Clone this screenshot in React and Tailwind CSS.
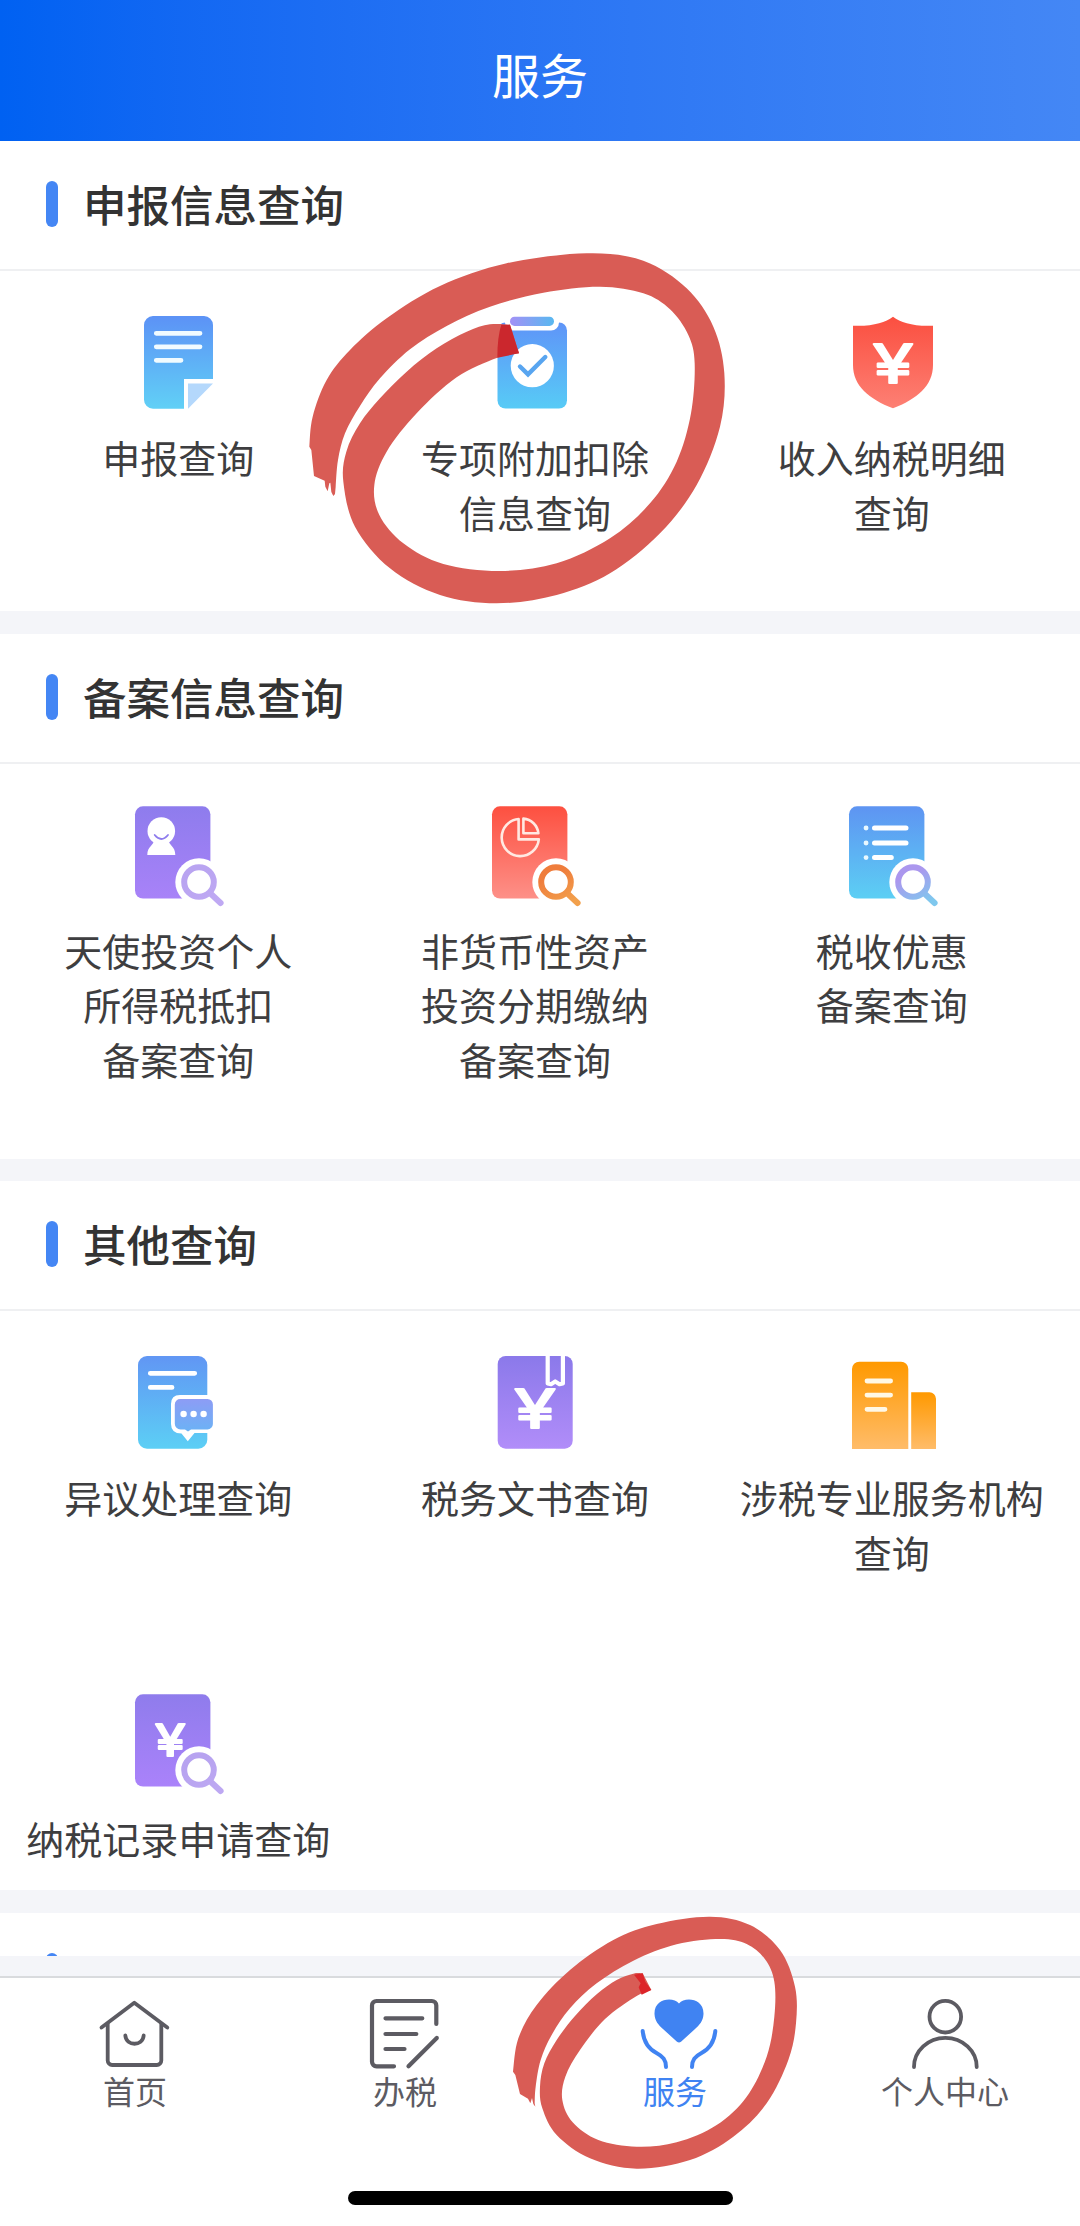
import clsx from 'clsx';

const sections = [
  {
    title: '申报信息查询',
    size: 'h-[470px]',
    items: [
      { icon: ReportIcon, lines: ['申报查询'] },
      { icon: DeductionIcon, lines: ['专项附加扣除', '信息查询'] },
      { icon: IncomeIcon, lines: ['收入纳税明细', '查询'] },
    ],
  },
  {
    title: '备案信息查询',
    size: 'h-[525px]',
    items: [
      { icon: AngelIcon, lines: ['天使投资个人', '所得税抵扣', '备案查询'] },
      { icon: AssetIcon, lines: ['非货币性资产', '投资分期缴纳', '备案查询'] },
      { icon: BenefitIcon, lines: ['税收优惠', '备案查询'] },
    ],
  },
  {
    title: '其他查询',
    size: 'h-[709px]',
    items: [
      { icon: DisputeIcon, lines: ['异议处理查询'] },
      { icon: TaxBookIcon, lines: ['税务文书查询'] },
      { icon: AgencyIcon, lines: ['涉税专业服务机构', '查询'] },
      { icon: RecordIcon, lines: ['纳税记录申请查询'] },
    ],
  },
];

const tabs = [
  { name: '首页', icon: HomeIcon },
  { name: '办税', icon: TaxIcon },
  { name: '服务', icon: ServiceIcon, active: true },
  { name: '个人中心', icon: ProfileIcon },
];

/* ---------- Service icons ---------- */

function Icon({ id, from, to, children }) {
  return (
    <svg viewBox="0 0 110 110" className="w-[110px] h-[110px] shrink-0" fill="none">
      <defs>
        <linearGradient id={id} x1="0" y1="0" x2="0" y2="1">
          <stop offset="0" stopColor={from} />
          <stop offset="1" stopColor={to} />
        </linearGradient>
      </defs>
      {children}
    </svg>
  );
}

function Yuan({ x, y, size, width }) {
  return (
    <text
      x={x}
      y={y}
      fontSize={size}
      textLength={width}
      lengthAdjust="spacingAndGlyphs"
      textAnchor="middle"
      fill="#fff"
      stroke="#fff"
      strokeWidth="2"
      strokeLinejoin="round"
      className="font-['Inter',sans-serif] font-normal"
    >
      ¥
    </text>
  );
}

function Magnifier({ id, from, to }) {
  return (
    <>
      <defs>
        <linearGradient id={id} gradientUnits="userSpaceOnUse" x1="72" y1="64" x2="94" y2="106">
          <stop offset="0.2" stopColor={from} />
          <stop offset="0.9" stopColor={to} />
        </linearGradient>
      </defs>
      <circle cx="76" cy="82" r="23.7" fill="#fff" />
      <circle cx="76" cy="82" r="14.8" stroke={`url(#${id})`} strokeWidth="6" />
      <path d="M88 94L97.6 103" stroke={`url(#${id})`} strokeWidth="6" strokeLinecap="round" />
    </>
  );
}

function ReportIcon() {
  return (
    <Icon id="report" from="#5c92f6" to="#61d0f6">
      <path d="M30 9H81a9 9 0 0 1 9 9V72H61V101.7H30a9 9 0 0 1-9-9V18a9 9 0 0 1 9-9Z" fill="url(#report)" />
      <path d="M33.3 26.3H77M33.3 39.8H77M33.3 53.3H58" stroke="#f0fbff" strokeWidth="4.8" strokeLinecap="round" />
      <path d="M65 76.5H90L65 101.7Z" fill="#b4d8fc" />
    </Icon>
  );
}

function DeductionIcon() {
  return (
    <Icon id="deduction" from="#5f94f8" to="#57cbf6">
      <defs>
        <linearGradient id="clip" x1="0" x2="1">
          <stop offset="0" stopColor="#a391f6" />
          <stop offset="1" stopColor="#58b8f0" />
        </linearGradient>
      </defs>
      <rect x="17.5" y="15.5" width="69.5" height="86" rx="8" fill="url(#deduction)" />
      <rect x="25" y="4.5" width="54" height="19" rx="8" fill="#fff" />
      <rect x="30" y="9.7" width="44" height="9.2" rx="4.5" fill="url(#clip)" />
      <circle cx="52.3" cy="58.7" r="21.6" fill="#fff" />
      <path d="M40 59.5L48 67.3L65.3 50" stroke="#58a5f0" strokeWidth="4.4" strokeLinecap="round" />
    </Icon>
  );
}

function IncomeIcon() {
  return (
    <Icon id="income" from="#fb4f40" to="#fd8074">
      <path
        d="M56 9.7C64 15.5 76 19.5 96 18.7V58C96 79 80 92 56 101.3C32 92 16 79 16 58V18.7C36 19.5 48 15.5 56 9.7Z"
        fill="url(#income)"
      />
      <Yuan x="56" y="75.5" size="53" width="40" />
    </Icon>
  );
}

function AngelIcon() {
  return (
    <Icon id="angel" from="#8e7ced" to="#a882f8">
      <rect x="12" y="6.3" width="75.4" height="92.3" rx="8" fill="url(#angel)" />
      <circle cx="38.3" cy="31" r="13.8" fill="#fff" />
      <path d="M30.5 41H46C45.5 45 52.3 46 52.3 55H24.3C24.3 46 31.3 45 30.5 41Z" fill="#fff" />
      <path d="M31.7 35Q38.3 43 45 35" stroke="#8e7ced" strokeWidth="1.8" strokeLinecap="round" />
      <Magnifier id="angelMag" from="#b9a4f1" to="#bfa9f3" />
    </Icon>
  );
}

function AssetIcon() {
  return (
    <Icon id="asset" from="#fd5040" to="#fd9088">
      <rect x="12" y="6.3" width="75.4" height="92.3" rx="8" fill="url(#asset)" />
      <path
        d="M38.6 19A18.6 18.6 0 1 0 58.8 39.4H38.6ZM43.4 18.6V33.3H58.4A16.5 16.5 0 0 0 43.4 18.6Z"
        stroke="#ffe9e2"
        strokeWidth="2.6"
        strokeLinejoin="round"
      />
      <Magnifier id="assetMag" from="#ef7d3c" to="#f2a04c" />
    </Icon>
  );
}

function BenefitIcon() {
  return (
    <Icon id="benefit" from="#5e94f2" to="#5ccff4">
      <rect x="12" y="6.3" width="75.4" height="92.3" rx="8" fill="url(#benefit)" />
      <path d="M37.5 28H69M37.5 43H69M37.5 57.6H54.3" stroke="#fff" strokeWidth="5" strokeLinecap="round" />
      <path d="M29 28h.1M29 43h.1M29 57.6h.1" stroke="#e8f8ff" strokeWidth="4.8" strokeLinecap="round" />
      <Magnifier id="benefitMag" from="#ab97ee" to="#7fc8ee" />
    </Icon>
  );
}

function DisputeIcon() {
  return (
    <Icon id="dispute" from="#6196f4" to="#5ccff5">
      <defs>
        <linearGradient id="bubble" x1="0" y1="0" x2="0" y2="1">
          <stop offset="0" stopColor="#8d9cf5" />
          <stop offset="1" stopColor="#6bb2f5" />
        </linearGradient>
      </defs>
      <rect x="15" y="9" width="69.3" height="92.7" rx="9" fill="url(#dispute)" />
      <path d="M27.3 26.3H71.7M27.3 40.4H49" stroke="#fff" strokeWidth="4.8" strokeLinecap="round" />
      <path d="M57 48H94V86H71.5L64.8 94.3L58.5 86.5Q48 86.5 48 77V57Q48 48 57 48Z" fill="#fff" />
      <path d="M57.5 52H84.5a5.4 5.4 0 0 1 5.4 5.4V77a5.4 5.4 0 0 1-5.4 5.4H68L65 84.5L62 82.4H57.5a5.7 5.7 0 0 1-5.7-5.7V57.4a5.4 5.4 0 0 1 5.7-5.4Z" fill="url(#bubble)" />
      <circle cx="60.6" cy="67" r="3.2" fill="#fff" />
      <circle cx="70.6" cy="67" r="3.2" fill="#fff" />
      <circle cx="80.6" cy="67" r="3.2" fill="#fff" />
    </Icon>
  );
}

function TaxBookIcon() {
  return (
    <Icon id="book" from="#8b79ea" to="#b18df9">
      <rect x="17.7" y="9" width="75" height="92.7" rx="8" fill="url(#book)" />
      <path d="M67.7 8V36.5L71 37.2L75.2 34.5L79.5 37.2L82.9 36.5V8" stroke="#fff" strokeWidth="4.2" strokeLinejoin="round" />
      <Yuan x="55" y="80.8" size="54" width="41" />
    </Icon>
  );
}

function AgencyIcon() {
  return (
    <Icon id="agency" from="#ff9900" to="#ffbc69">
      <path d="M15 102V22a7.3 7.3 0 0 1 7.3-7.3H64a7.3 7.3 0 0 1 7.3 7.3V102Z" fill="url(#agency)" />
      <path d="M74.2 102V45.3H92.5a6.5 6.5 0 0 1 6.5 6.5V102Z" fill="url(#agency)" />
      <path d="M30 34H53.6M30 48.1H53.6M30 62.3H48" stroke="#fff8e6" strokeWidth="4.8" strokeLinecap="round" />
    </Icon>
  );
}

function RecordIcon() {
  return (
    <Icon id="record" from="#8f7cec" to="#aa82fa">
      <rect x="12" y="6.3" width="75.4" height="92.3" rx="8" fill="url(#record)" />
      <Yuan x="47.3" y="68" size="44" width="30" />
      <Magnifier id="recordMag" from="#b7a3f0" to="#bda8f2" />
    </Icon>
  );
}

/* ---------- Tab bar icons ---------- */

function TabSvg({ children, width = 3.8 }) {
  return (
    <svg
      viewBox="0 0 90 80"
      className="w-[90px] h-20"
      fill="none"
      stroke="currentColor"
      strokeWidth={width}
      strokeLinecap="round"
      strokeLinejoin="round"
    >
      {children}
    </svg>
  );
}

function HomeIcon() {
  return (
    <TabSvg>
      <path d="M11.5 35.5L44.3 10.8L77.3 35.5" />
      <path d="M17.7 32V68.5a4.5 4.5 0 0 0 4.5 4.5H66.8a4.5 4.5 0 0 0 4.5-4.5V32" />
      <path d="M35.3 43.5C36.5 54.5 52.5 54.5 53.7 43.5" />
    </TabSvg>
  );
}

function TaxIcon() {
  return (
    <TabSvg width={4.2}>
      <path d="M76.3 32V13.5a4.5 4.5 0 0 0-4.5-4.5H16.5a4.5 4.5 0 0 0-4.5 4.5V69.8a4.5 4.5 0 0 0 4.5 4.5H34" />
      <path d="M48.5 74.3L76.8 46" />
      <path d="M25.5 26.3H62.3M25.5 42H56.3M25.5 57H44.5" />
    </TabSvg>
  );
}

function ServiceIcon() {
  return (
    <TabSvg width={4}>
      <path
        d="M49 11.5C43.5 4.5 24 6 24.5 22C24.8 29 28.5 33 33 37L47 49.8Q49 51.3 51 49.8L65 37C69.5 33 73.2 29 73.5 22C74 6 54.5 4.5 49 11.5Z"
        fill="currentColor"
        stroke="none"
      />
      <path d="M12.7 39C13.5 48 18 56.5 26.5 61C33 64.5 36 68 36 75" />
      <path d="M85.3 39C84.5 48 80 56.5 71.5 61C65 64.5 62 68 62 75" />
    </TabSvg>
  );
}

function ProfileIcon() {
  return (
    <TabSvg>
      <circle cx="45.3" cy="24.7" r="15.8" />
      <path d="M14 75A31.3 29 0 0 1 76.7 75" />
    </TabSvg>
  );
}

/* ---------- Marker circles ---------- */

// Catmull-Rom spline through the points, as cubic bezier commands
function spline(pts) {
  let d = '';
  for (let i = 0; i < pts.length - 1; i++) {
    const p0 = pts[i - 1] || pts[i];
    const p1 = pts[i];
    const p2 = pts[i + 1];
    const p3 = pts[i + 2] || p2;
    d += `C${p1[0] + (p2[0] - p0[0]) / 6} ${p1[1] + (p2[1] - p0[1]) / 6} ${p2[0] - (p3[0] - p1[0]) / 6} ${p2[1] - (p3[1] - p1[1]) / 6} ${p2[0]} ${p2[1]}`;
  }
  return d;
}

function markerPath({ inner, tail, outer }) {
  const rough = tail.concat([outer[0]]).map((p) => `L${p[0]} ${p[1]}`).join('');
  return `M${inner[0][0]} ${inner[0][1]}${spline(inner)}${rough}${spline(outer)}Z`;
}

const bigMarker = {
  inner: [[687, 340], [620, 354], [500, 412], [380, 520], [290, 635], [253, 735], [268, 825], [340, 910], [460, 972], [630, 993], [800, 970], [960, 895], [1080, 790], [1160, 665], [1203, 520], [1214, 370], [1195, 285], [1140, 208], [1060, 160], [930, 140], [760, 158], [600, 200], [470, 258], [360, 328], [270, 415], [210, 498], [165, 580], [144, 660], [137, 740]],
  tail: [[135, 762], [130, 768], [124, 756], [121, 728], [118, 730], [113, 754], [106, 740], [104, 722], [72, 708], [64, 630]],
  outer: [[58, 620], [68, 530], [110, 420], [180, 330], [290, 235], [450, 138], [650, 70], [890, 40], [1060, 62], [1190, 145], [1270, 260], [1303, 400], [1290, 560], [1220, 735], [1110, 880], [960, 1000], [800, 1065], [620, 1090], [450, 1065], [300, 985], [195, 860], [160, 725], [169, 635], [210, 550], [270, 475], [350, 395], [440, 325], [530, 275], [600, 253], [660, 254]],
};

const smallMarker = {
  inner: [[484, 300], [440, 318], [345, 387], [270, 480], [226, 560], [217, 630], [248, 697], [325, 750], [440, 770], [560, 757], [680, 705], [770, 620], [830, 500], [853, 380], [853, 275], [825, 208], [770, 162], [690, 147], [560, 163], [430, 212], [320, 280], [240, 355], [185, 435], [152, 510], [137, 590], [134, 640]],
  tail: [[136, 650], [130, 642], [126, 624], [121, 640], [114, 626], [90, 612], [76, 555]],
  outer: [[69, 545], [85, 445], [140, 345], [240, 240], [370, 150], [500, 102], [660, 80], [780, 105], [870, 180], [915, 290], [918, 400], [895, 510], [830, 640], [730, 740], [600, 810], [440, 836], [300, 805], [200, 735], [157, 655], [150, 590], [163, 520], [200, 450], [255, 378], [320, 313], [380, 270], [430, 251], [458, 250]],
};

function Markers() {
  return (
    <>
      <svg viewBox="0 0 1350 1140" className="absolute left-[290px] top-[240px] w-[450px] h-[380px] pointer-events-none">
        <path d={markerPath(bigMarker)} fill="#d95c55" />
        <path d="M634 254L660 254L687 340L622 353Q622 290 634 254Z" fill="#cb272d" />
      </svg>
      <svg viewBox="0 0 990 1008" className="absolute left-[490px] top-[1890px] w-[330px] h-[336px] pointer-events-none">
        <path d={markerPath(smallMarker)} fill="#d95c55" />
        <path d="M432 254L458 250L466 275L484 300L455 314L446 292L452 280Z" fill="#dc2429" />
      </svg>
    </>
  );
}

/* ---------- Page ---------- */

function SectionTitle({ children }) {
  return (
    <div className="flex items-start h-32 pl-[46px] pt-10">
      <span className="w-3 h-[46px] rounded-full bg-[#4486f4]" />
      <h2 className="ml-[25px] text-[43.5px] leading-[46px] font-medium text-[#333]">{children}</h2>
    </div>
  );
}

function Section({ title, size, items }) {
  return (
    <section className={clsx('shrink-0 bg-white', size)}>
      <SectionTitle>{title}</SectionTitle>
      <div className="border-t-2 border-[#eff0f2] pt-9">
        <div className="grid grid-cols-3 w-[1070px] gap-y-[109px]">
          {items.map(({ icon: ItemIcon, lines }) => (
            <div key={lines.join('')} className="flex flex-col items-center">
              <ItemIcon />
              <p className="mt-[13px] text-center text-[38px] leading-[54.6px] text-[#3e3e40] whitespace-nowrap">
                {lines.map((line) => (
                  <span key={line} className="block">{line}</span>
                ))}
              </p>
            </div>
          ))}
        </div>
      </div>
    </section>
  );
}

export default function App() {
  return (
    <div className="relative flex flex-col w-[1080px] h-[2226px] overflow-hidden bg-white font-['Noto_Sans_CJK_SC',sans-serif]">
      {/* Header */}
      <header className="flex items-center justify-center shrink-0 h-[141px] pt-1 bg-linear-to-r from-[#0061f2] to-[#4487f5]">
        <h1 className="text-[48px] leading-none text-white">服务</h1>
      </header>

      {/* Sections */}
      <main className="flex flex-col flex-1 min-h-0 gap-[22.5px] overflow-hidden bg-[#f4f5f9]">
        {sections.map((section) => (
          <Section key={section.title} {...section} />
        ))}
        <div className="h-[43px] shrink-0 overflow-hidden bg-white">
          <SectionTitle />
        </div>
      </main>

      {/* Tab bar */}
      <nav className="flex flex-col items-center shrink-0 h-[250px] border-t-2 border-[#d9dbde] bg-white">
        <div className="grid grid-cols-4 w-full pt-3.5">
          {tabs.map(({ name, icon: TabIcon, active }) => (
            <div
              key={name}
              className={clsx('flex flex-col items-center', active ? 'text-[#4083f2]' : 'text-[#5c5b62]')}
            >
              <TabIcon />
              <span className="text-[32px] leading-9">{name}</span>
            </div>
          ))}
        </div>
        {/* Home indicator */}
        <span className="mt-[83px] w-[385px] h-3.5 rounded-full bg-black" />
      </nav>

      <Markers />
    </div>
  );
}
